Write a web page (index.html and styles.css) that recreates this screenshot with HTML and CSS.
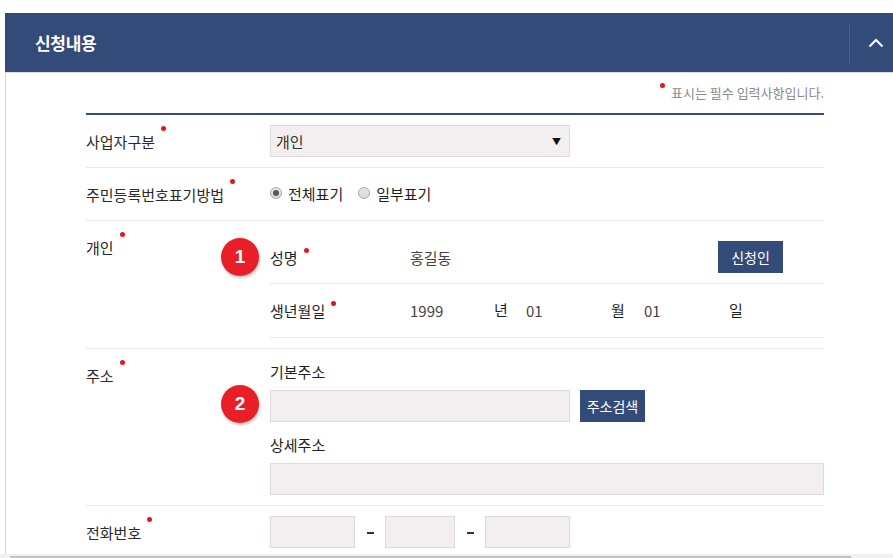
FILE: index.html
```html
<!DOCTYPE html>
<html>
<head>
  <meta charset="utf-8">
  <link rel="stylesheet" href="styles.css">
</head>
<body>
  <section class="panel">
    <header class="panel-head">
      <h2>신청내용</h2>
      <button class="toggle" type="button" aria-label="접기">
        <svg width="16" height="10" viewBox="0 0 16 10"><polyline points="1.5,8.5 8,2 14.5,8.5" fill="none" stroke="#fff" stroke-width="2"/></svg>
      </button>
    </header>

    <div class="panel-body">
      <p class="notice"><span class="dot"></span>표시는 필수 입력사항입니다.</p>

      <div class="form">
        <div class="form-row">
          <div class="row-label"><span class="req">사업자구분</span></div>
          <div class="row-field">
            <div class="select">개인<span class="caret">▼</span></div>
          </div>
        </div>

        <div class="form-row">
          <div class="row-label"><span class="req">주민등록번호표기방법</span></div>
          <div class="row-field radios">
            <label class="radio"><input type="radio" name="rrn" checked>전체표기</label>
            <label class="radio"><input type="radio" name="rrn">일부표기</label>
          </div>
        </div>

        <div class="form-row">
          <div class="row-label"><span class="req">개인</span></div>
          <div class="row-field">
            <div class="sub-row">
              <span class="badge badge-1">1</span>
              <div class="sub-label"><span class="req">성명</span></div>
              <div class="sub-value name">홍길동</div>
              <button class="btn" type="button">신청인</button>
            </div>
            <div class="sub-row last">
              <div class="sub-label"><span class="req">생년월일</span></div>
              <span class="date-num">1999</span><span class="date-unit">년</span>
              <span class="date-num wide">01</span><span class="date-unit wide">월</span>
              <span class="date-num wide">01</span><span class="date-unit">일</span>
            </div>
          </div>
        </div>

        <div class="form-row">
          <div class="row-label"><span class="req">주소</span></div>
          <div class="row-field">
            <div class="caption">기본주소</div>
            <div class="addr-line">
              <span class="badge badge-2">2</span>
              <div class="input addr"></div>
              <button class="btn" type="button">주소검색</button>
            </div>
            <div class="caption next">상세주소</div>
            <div class="input full"></div>
          </div>
        </div>

        <div class="form-row">
          <div class="row-label"><span class="req">전화번호</span></div>
          <div class="row-field phone">
            <div class="input tel-a"></div>
            <span class="dash"></span>
            <div class="input tel-b"></div>
            <span class="dash"></span>
            <div class="input tel-a"></div>
          </div>
        </div>
      </div>
    </div>
  </section>

  <div class="scrollbar"><div class="thumb"></div></div>
</body>
</html>
```

FILE: styles.css
```css
body {
  margin: 0;
  overflow: hidden;
  font-family: 'Noto Sans CJK KR', 'Noto Sans', sans-serif;
  font-size: 15px;
  color: #2a2a2a;
  background: #fff;
}

.panel {
  width: 896px;
  margin: 13px 0 0 5px;
}

.panel-head {
  height: 59px;
  display: flex;
  align-items: center;
  padding-left: 30px;
  background-color: #334b78;
}

.panel-head h2 {
  margin: 0;
  font-size: 17px;
  font-weight: 700;
  color: #fff;
  letter-spacing: -0.3px;
}

.toggle {
  margin-left: auto;
  width: 52px;
  height: 40px;
  padding: 0;
  border: none;
  border-left: 1px solid #4b5f8b;
  background: none;
  display: flex;
  align-items: center;
  justify-content: center;
  cursor: pointer;
}

.panel-body {
  border-top: 1px solid #dcdcdc;
  border-left: 1px solid #d9d9d9;
  padding: 0 77px 0 80px;
}

.notice {
  margin: 0;
  height: 40px;
  padding-top: 10px;
  box-sizing: border-box;
  text-align: right;
  font-size: 13px;
  line-height: 20px;
  color: #8a8a8a;
}

.notice .dot {
  display: inline-block;
  width: 5px;
  height: 5px;
  border-radius: 50%;
  background: #e8141c;
  margin-right: 6px;
  vertical-align: top;
}

.form {
  border-top: 2px solid #334b78;
}

.form-row {
  display: flex;
  padding: 10px 0;
  border-bottom: 1px solid #e8e8e8;
}

.row-label {
  width: 184px;
  height: 32px;
  flex-shrink: 0;
  line-height: 34px;
}

.row-field {
  flex: 1;
  position: relative;
}

.req::after {
  content: "";
  display: inline-block;
  width: 5px;
  height: 5px;
  border-radius: 50%;
  background: #e8141c;
  margin-left: 6px;
  vertical-align: top;
  margin-top: 1px;
}

.select {
  width: 300px;
  height: 32px;
  box-sizing: border-box;
  display: flex;
  align-items: center;
  padding: 0 8px 0 5px;
  background: #f3eef0;
  border: 1px solid #e3d8da;
  color: #333;
}

.caret {
  margin-left: auto;
  font-size: 9px;
  color: #111;
}

.radios {
  display: flex;
  align-items: center;
  height: 30px;
}

.radio {
  display: flex;
  align-items: center;
  margin-right: 15px;
  color: #1e1e1e;
}

.radio input {
  appearance: none;
  -webkit-appearance: none;
  width: 12px;
  height: 12px;
  margin: 0 6px 0 0;
  border-radius: 50%;
  border: 1px solid #a9a9a9;
  background: linear-gradient(#e9e5e5, #dcd7d8);
  display: grid;
  place-items: center;
}

.radio input:checked::before {
  content: "";
  width: 6px;
  height: 6px;
  border-radius: 50%;
  background: #5a5a5a;
}

.sub-row {
  position: relative;
  display: flex;
  align-items: center;
  min-height: 32px;
  padding: 10px 0;
  border-bottom: 1px solid #e8e8e8;
}

.sub-row.last {
  padding-bottom: 11px;
}

.sub-label {
  width: 140px;
  flex-shrink: 0;
  color: #1e1e1e;
}

.sub-value.name {
  width: 308px;
  color: #444;
}

.date-num {
  width: 84px;
  color: #444;
}

.date-num.wide {
  width: 85px;
}

.date-unit {
  width: 32px;
  color: #1e1e1e;
  margin-top: -2px;
}

.date-unit.wide {
  width: 33px;
}

.btn {
  height: 32px;
  width: 65px;
  padding: 0;
  border: none;
  background-color: #334b78;
  color: #fff;
  font-family: inherit;
  font-size: 14px;
  cursor: pointer;
}

.caption {
  line-height: 26px;
  margin-bottom: 5px;
  color: #1e1e1e;
}

.caption.next {
  margin-top: 10px;
}

.addr-line {
  position: relative;
  display: flex;
  gap: 10px;
}

.input {
  height: 32px;
  box-sizing: border-box;
  background: #f3eef0;
  border: 1px solid #e3d8da;
}

.input.addr {
  width: 300px;
}

.input.full {
  width: 100%;
}

.phone {
  display: flex;
  align-items: center;
}

.input.tel-a {
  width: 85px;
}

.input.tel-b {
  width: 70px;
}

.dash {
  width: 30px;
  display: flex;
  justify-content: center;
}

.dash::before {
  content: "";
  width: 7px;
  height: 2px;
  margin-top: 2px;
  background: #333;
}

.badge {
  position: absolute;
  left: -49px;
  width: 38px;
  height: 38px;
  border-radius: 50%;
  background: #e91f27;
  color: #fff;
  font-family: 'Liberation Sans', Arial, sans-serif;
  font-size: 19px;
  font-weight: 700;
  line-height: 38px;
  text-align: center;
  box-shadow: 1px 2px 3px rgba(0, 0, 0, 0.25);
}

.badge-1 {
  top: 7px;
}

.badge-2 {
  top: -5px;
}

.scrollbar {
  position: fixed;
  left: 0;
  right: 0;
  bottom: 0;
  height: 4px;
  background: #f0f0f0;
}

.scrollbar .thumb {
  position: absolute;
  left: 10px;
  bottom: 0;
  width: 841px;
  height: 2px;
  background: #c1c1c1;
}
```
